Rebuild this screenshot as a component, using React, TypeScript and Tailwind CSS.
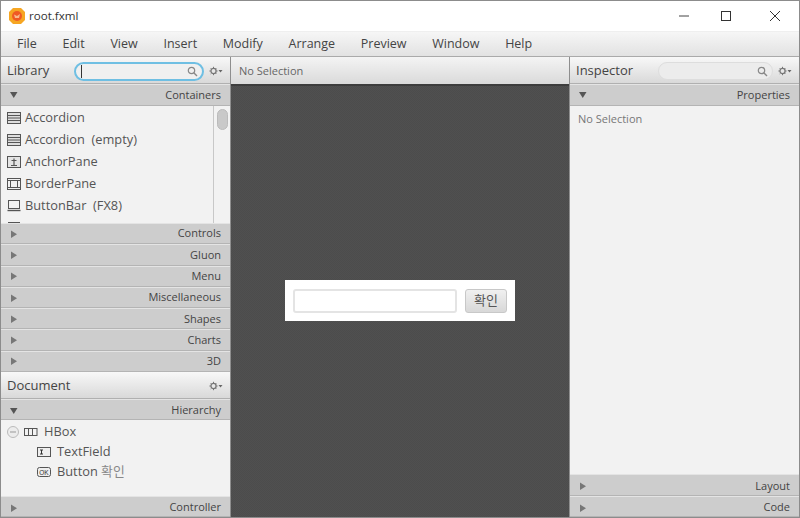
import React from "react";

const font = { fontFamily: '"Open Sans", "Noto Sans", "Noto Sans CJK KR", sans-serif' };

function Tri({ open }: { open?: boolean }) {
  return (
    <svg width="10" height="10" viewBox="0 0 10 10" className="shrink-0">
      {open ? <path d="M1 2h7.5L4.75 8z" fill="#555" /> : <path d="M2 1.5v7.5L8 5.2z" fill="#777" />}
    </svg>
  );
}

function Section({ label, open, h = "h-[21.3px]" }: { label: string; open?: boolean; h?: string }) {
  return (
    <div className={`${h} shrink-0 flex items-center justify-between pl-2 pr-[9px] bg-[#cdcdcd] border-t border-t-[#e4e4e4] border-b border-b-[#b4b4b4] text-[11px] text-[#444]`}>
      <Tri open={open} />
      <span>{label}</span>
    </div>
  );
}

function Gear() {
  return (
    <svg width="14" height="10" viewBox="0 0 14 10" className="shrink-0">
      <circle cx="4.5" cy="5" r="2.6" fill="none" stroke="#777" strokeWidth="1.3" />
      <path d="M4.5 0.8v1.2M4.5 8v1.2M0.4 5h1.2M7.4 5h1.2M1.7 2.2l.8.8M6.5 7l.8.8M1.7 7.8l.8-.8M6.5 3l.8-.8" stroke="#777" strokeWidth="1" />
      <path d="M9.5 4h4l-2 2.6z" fill="#666" />
    </svg>
  );
}

function Search() {
  return (
    <svg width="11" height="11" viewBox="0 0 11 11" className="shrink-0">
      <circle cx="4.5" cy="4.5" r="3.2" fill="none" stroke="#888" strokeWidth="1.2" />
      <path d="M7 7l3 3" stroke="#888" strokeWidth="1.4" />
    </svg>
  );
}

function PanelHeader({ title, extra, children }: { title: string; extra?: string; children?: React.ReactNode }) {
  return (
    <div className={`h-[27px] shrink-0 flex items-center pl-[6px] pr-[7px] bg-gradient-to-b from-[#f8f8f8] to-[#d9d9d9] border-b border-b-[#b0b0b0] text-[13px] text-[#444] ${extra ?? ""}`}>
      <span>{title}</span>
      <div className="flex-1" />
      {children}
      <Gear />
    </div>
  );
}

function ItemIcon({ kind }: { kind: string }) {
  const s = { fill: "none", stroke: "#555", strokeWidth: 1 };
  return (
    <svg width="14" height="14" viewBox="0 0 14 14" className="shrink-0">
      {kind === "accordion" && (
        <g {...s}>
          <rect x="0.5" y="1.5" width="13" height="11" fill="#ddd" />
          <path d="M0.5 4.5h13M0.5 7h13M0.5 9.5h13" />
        </g>
      )}
      {kind === "anchor" && (
        <g {...s}>
          <rect x="0.5" y="1.5" width="13" height="11" fill="#e4e4e4" />
          <path d="M7 3.5v6.5M4.5 5.5h5M4 10.5h6" strokeWidth="1.2" />
        </g>
      )}
      {kind === "border" && (
        <g {...s}>
          <rect x="0.5" y="1.5" width="13" height="11" />
          <rect x="3.5" y="3.5" width="7" height="7" />
          <path d="M0.5 3.5h13M0.5 10.5h13" />
        </g>
      )}
      {kind === "bar" && (
        <g {...s}>
          <rect x="1.5" y="1.5" width="11" height="8" />
          <path d="M0.5 11.5h13" strokeWidth="1.4" />
        </g>
      )}
    </svg>
  );
}

function Item({ kind, label }: { kind: string; label: string }) {
  return (
    <div className="h-[22px] shrink-0 flex items-center gap-[4px] pl-[6px] text-[12.8px] text-[#555] whitespace-pre">
      <ItemIcon kind={kind} />
      <span>{label}</span>
    </div>
  );
}

export default function App() {
  return (
    <div style={font} className="w-[800px] h-[518px] overflow-hidden flex flex-col bg-white border border-[#8c8c8c]">
      <div className="h-[30px] shrink-0 flex items-center bg-white">
        <svg width="18" height="18" viewBox="0 0 18 18" className="ml-[7px] shrink-0">
          <path d="M5 1h8l4 4v8l-4 4H5l-4-4V5z" fill="#f6a623" />
          <circle cx="9" cy="9" r="5" fill="#ef5a24" />
          <path d="M6 7.5l3 1.5 3-2-1 4H7z" fill="#f9b98c" />
        </svg>
        <span className="ml-[3px] text-[11.6px] text-[#333]">root.fxml</span>
        <div className="flex-1" />
        <svg width="12" height="12" viewBox="0 0 12 12" className="mr-[30px]"><path d="M1 6h10" stroke="#444" strokeWidth="1" /></svg>
        <svg width="12" height="12" viewBox="0 0 12 12" className="mr-[37px]"><rect x="1.5" y="1.5" width="9" height="9" fill="none" stroke="#333" strokeWidth="1" /></svg>
        <svg width="12" height="12" viewBox="0 0 12 12" className="mr-[18px]"><path d="M1 1l10 10M11 1L1 11" stroke="#333" strokeWidth="1" /></svg>
      </div>
      <div className="h-[26px] shrink-0 flex items-center gap-[25.7px] pl-4 bg-gradient-to-b from-[#f6f6f6] to-[#e2e2e2] border-t border-t-[#efefef] border-b border-b-[#aaaaaa] text-[12.5px] text-[#444]">
        {["File", "Edit", "View", "Insert", "Modify", "Arrange", "Preview", "Window", "Help"].map((m) => (
          <span key={m}>{m}</span>
        ))}
      </div>
      <div className="flex-1 min-h-0 flex">
        <div className="w-[229px] shrink-0 flex flex-col bg-[#f2f2f2]">
          <PanelHeader title="Library" extra="pt-[2px]">
            <div className="w-[130px] h-[19px] mr-[5px] rounded-full bg-[#f0f0f0] border-2 border-[#6fbfe3] flex items-center pl-[5px] pr-[4px]">
              <div className="w-px h-[13px] bg-[#333]" />
              <div className="flex-1" />
              <Search />
            </div>
          </PanelHeader>
          <Section label="Containers" open h="h-[22px]" />
          <div className="h-[117px] shrink-0 flex overflow-hidden">
            <div className="flex-1 flex flex-col overflow-hidden pt-[1px]">
              <Item kind="accordion" label="Accordion" />
              <Item kind="accordion" label="Accordion  (empty)" />
              <Item kind="anchor" label="AnchorPane" />
              <Item kind="border" label="BorderPane" />
              <Item kind="bar" label="ButtonBar  (FX8)" />
              <Item kind="bar" label="" />
            </div>
            <div className="w-[17px] shrink-0 border-l border-l-[#c8c8c8] bg-[#f2f2f2] flex justify-center pt-[3px]">
              <div className="w-[11px] h-[21px] rounded-full bg-[#c9c9c9] border border-[#bbbbbb]" />
            </div>
          </div>
          {["Controls", "Gluon", "Menu", "Miscellaneous", "Shapes", "Charts", "3D"].map((l) => (
            <Section key={l} label={l} />
          ))}
          <PanelHeader title="Document" extra="pt-[2px]" />
          <Section label="Hierarchy" open h="h-[21px] pt-[2px]" />
          <div className="flex-1 min-h-0 flex flex-col text-[12.8px] text-[#555] pt-[2px]">
            <div className="h-[20px] flex items-center pl-[5px]">
              <svg width="14" height="14" viewBox="0 0 14 14" className="shrink-0">
                <circle cx="7" cy="7" r="5.5" fill="#ececec" stroke="#bbb" />
                <path d="M4 7h6" stroke="#999" />
              </svg>
              <svg width="14" height="10" viewBox="0 0 14 10" className="ml-[4px] shrink-0">
                <rect x="0.5" y="1.5" width="12.5" height="7" fill="none" stroke="#555" />
                <path d="M4.5 1.5v7M8.5 1.5v7" stroke="#555" />
              </svg>
              <span className="ml-[6px]">HBox</span>
            </div>
            <div className="h-[20px] flex items-center pl-[36px]">
              <svg width="14" height="10" viewBox="0 0 14 10" className="shrink-0">
                <rect x="0.5" y="0.5" width="13" height="9" fill="#eee" stroke="#555" />
                <path d="M3 3h3M3 7h3M4.5 3v4" stroke="#333" />
              </svg>
              <span className="ml-[6px]">TextField</span>
            </div>
            <div className="h-[20px] flex items-center pl-[36px]">
              <svg width="14" height="10" viewBox="0 0 14 10" className="shrink-0">
                <rect x="0.5" y="0.5" width="13" height="9" rx="2" fill="#eee" stroke="#555" />
                <text x="7" y="7.5" textAnchor="middle" fontSize="6.5" fill="#333" fontFamily="Liberation Sans">OK</text>
              </svg>
              <span className="ml-[6px]">Button <span className="text-[#888]">확인</span></span>
            </div>
          </div>
          <Section label="Controller" h="h-[21px] pt-[2px]" />
        </div>
        <div className="w-px shrink-0 bg-[#8e8e8e]" />
        <div className="flex-1 min-w-0 flex flex-col bg-[#4e4e4e] bg-[repeating-conic-gradient(#505050_0_25%,#4c4c4c_0_50%)] bg-size-[2px_2px]">
          <div className="h-[29px] shrink-0 flex items-center pl-2 pt-[2px] bg-gradient-to-b from-[#f4f4f4] to-[#dadada] border-b-2 border-b-[#3d3d3d] text-[11px] text-[#666]">
            No Selection
          </div>
          <div className="flex-1 flex items-center justify-center pb-[2px]">
            <div className="w-[230px] h-[41px] bg-white flex items-center gap-2 pl-2 pr-2">
              <div className="w-[164px] h-[24px] rounded-[3px] bg-white border-2 border-[#e4e4e4]" />
              <div className="w-[42px] h-[24px] rounded-[3px] bg-gradient-to-b from-[#f0f0f0] to-[#d8d8d8] border border-[#c8c8c8] flex items-center justify-center text-[13px] text-[#555]">
                확인
              </div>
            </div>
          </div>
        </div>
        <div className="w-px shrink-0 bg-[#8e8e8e]" />
        <div className="w-[229px] shrink-0 flex flex-col bg-[#f2f2f2]">
          <PanelHeader title="Inspector" extra="pt-[2px]">
            <div className="w-[115px] h-[18px] mr-[5px] rounded-full bg-[#ececec] border border-[#dddddd] flex items-center justify-end pr-[4px]">
              <Search />
            </div>
          </PanelHeader>
          <Section label="Properties" open h="h-[22px]" />
          <div className="flex-1 pl-2 pt-[5px] text-[11px] text-[#777]">No Selection</div>
          <Section label="Layout" h="h-[22px] pt-[2px]" />
          <Section label="Code" h="h-[21px] pt-[2px]" />
        </div>
      </div>
    </div>
  );
}
